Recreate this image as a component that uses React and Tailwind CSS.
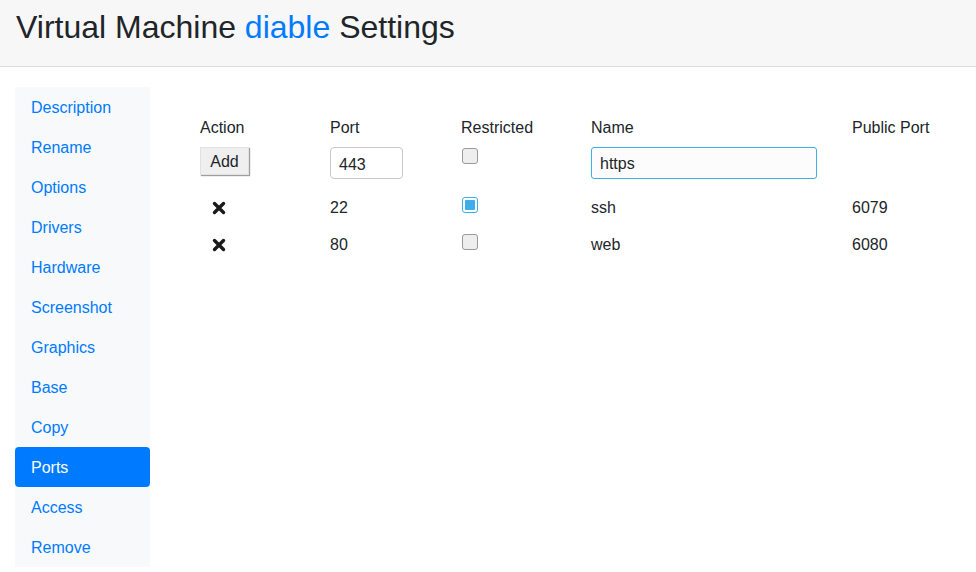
import React from "react";

const items = ["Description","Rename","Options","Drivers","Hardware","Screenshot","Graphics","Base","Copy","Ports","Access","Remove"];

function Box({ checked }) {
  if (checked) {
    return (
      <div className="w-[16px] h-[16px] rounded-[3px] border border-[#3daee9] bg-white p-[2px]">
        <div className="w-full h-full bg-[#3daee9] rounded-[1px]" />
      </div>
    );
  }
  return <div className="w-[16px] h-[16px] rounded-[3px] border border-[#9a9a9a] bg-[#eeeeee]" />;
}

function X() {
  return (
    <svg width="14" height="14" viewBox="0 0 14 14" className="ml-[12px]">
      <path d="M2.5 2.5 L11.5 11.5 M11.5 2.5 L2.5 11.5" stroke="#1a1a1a" strokeWidth="3.4" strokeLinecap="round" />
    </svg>
  );
}

export default function App() {
  const cols = "grid grid-cols-[130px_131px_130px_261px_1fr]";
  return (
    <div className="min-h-[572px] bg-white text-[#212529]" style={{ fontFamily: '"Liberation Sans", Arial, sans-serif' }}>
      <div className="h-[67px] bg-[#f7f7f7] border-b border-[#dcdcdc] pl-[16px] pt-[8px]">
        <h1 className="text-[32px] leading-[38px] text-[#212529]">
          Virtual Machine <span className="text-[#007bff]">diable</span> Settings
        </h1>
      </div>
      <div className="flex">
        <div className="ml-[15px] mt-[20px] w-[135px] bg-[#f8f9fa] flex flex-col">
          {items.map((it) => (
            <div
              key={it}
              className={
                "h-[40px] px-[16px] pt-[2px] flex items-center text-[16px] rounded-[4px] " +
                (it === "Ports" ? "bg-[#007bff] text-white" : "text-[#007bff]")
              }
            >
              {it}
            </div>
          ))}
        </div>
        <div className="pl-[50px] pt-[49px] flex-1 text-[16px]">
          <div className={cols + " h-[24px] items-center"}>
            <div>Action</div>
            <div>Port</div>
            <div>Restricted</div>
            <div>Name</div>
            <div>Public Port</div>
          </div>
          <div className={cols + " mt-[7px] h-[32px]"}>
            <div>
              <button className="h-[28px] w-[49px] pt-[1px] bg-[#efefef] border border-[#e2e2e2] shadow-[1px_1px_1px_#9e9e9e] text-[16px] text-[#212529]">
                Add
              </button>
            </div>
            <div>
              <div className="w-[73px] h-[32px] border border-[#c8c8c8] rounded-[4px] flex items-center pl-[8px] pt-[3px]">443</div>
            </div>
            <div className="pt-[1px] pl-[1px]">
              <Box />
            </div>
            <div>
              <div className="w-[226px] h-[32px] border border-[#3daee9] rounded-[3px] bg-[#fcfcfc] flex items-center pl-[8px] pt-[2px]">https</div>
            </div>
            <div />
          </div>
          <div className={cols + " mt-[10px] h-[37px] items-center"}>
            <div><X /></div>
            <div>22</div>
            <div className="-mt-[6px] pl-[1px]"><Box checked /></div>
            <div>ssh</div>
            <div>6079</div>
          </div>
          <div className={cols + " h-[37px] items-center"}>
            <div><X /></div>
            <div>80</div>
            <div className="-mt-[5px] pl-[1px]"><Box /></div>
            <div>web</div>
            <div>6080</div>
          </div>
        </div>
      </div>
    </div>
  );
}
